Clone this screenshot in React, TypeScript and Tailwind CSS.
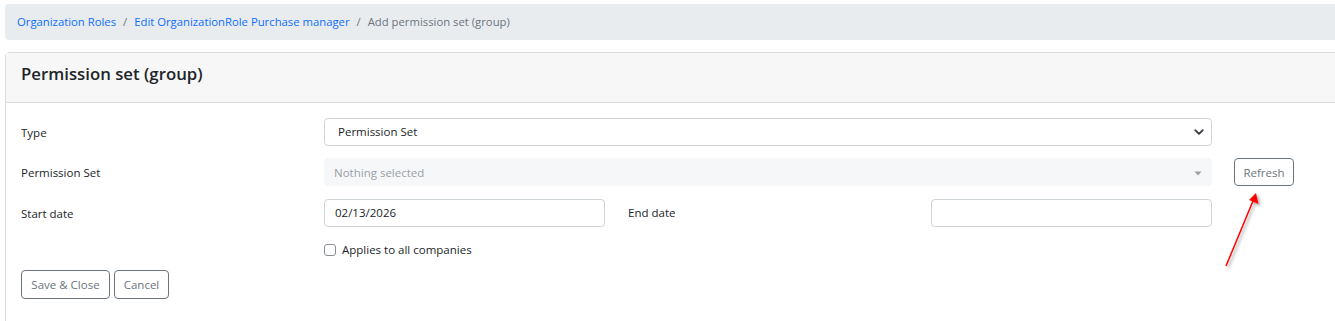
import React from "react";

const font = { fontFamily: '"Open Sans", "Noto Sans", sans-serif' };

export default function App() {
  return (
    <div className="w-[1335px] h-[321px] overflow-hidden bg-white relative" style={font}>
      <div className="w-[1360px] pl-[5px] pt-[4px]">
        {/* Breadcrumb */}
        <div className="h-[36px] bg-[#e9ecef] rounded-[4px] flex items-center pl-[12px] pt-[1px] text-[11.3px] text-[#6c757d]">
          <span className="text-[#0d6efd]">Organization Roles</span>
          <span className="px-[7px]">/</span>
          <span className="text-[#0d6efd]">Edit OrganizationRole Purchase manager</span>
          <span className="px-[7px]">/</span>
          <span>Add permission set (group)</span>
        </div>

        {/* Card */}
        <div className="mt-[12px] border border-[#dcdcdc] rounded-[4px]">
          <div className="h-[50px] bg-[#f7f7f7] border-b border-[#dcdcdc] flex items-center pl-[15px] pb-[7px] text-[16.8px] font-semibold text-[#212529]">
            Permission set (group)
          </div>
          <div className="pl-[15px] pt-[15px] pb-[40px] text-[11.5px] text-[#212529]">
            {/* Type */}
            <div className="flex items-center h-[28px]">
              <div className="w-[303px] pt-[1px]">Type</div>
              <div className="w-[888px] h-[28px] border border-[#ced4da] rounded-[4px] flex items-center justify-between pl-[13px] pr-[6px]">
                <span>Permission Set</span>
                <svg width="12" height="12" viewBox="0 0 16 16">
                  <path d="M3 5.5l5 5 5-5" fill="none" stroke="#343a40" strokeWidth="2.4" strokeLinecap="round" strokeLinejoin="round" />
                </svg>
              </div>
            </div>
            {/* Permission Set */}
            <div className="flex items-center h-[28px] mt-[12px]">
              <div className="w-[303px] pt-[1px]">Permission Set</div>
              <div className="w-[888px] h-[28px] bg-[#f6f7f9] rounded-[4px] flex items-center justify-between pl-[10px] pr-[10px] pt-[2px] text-[#9aa0a6]">
                <span>Nothing selected</span>
                <svg width="8" height="5" viewBox="0 0 8 5">
                  <path d="M0.5 0.5h7L4 4.5z" fill="#9aa0a6" />
                </svg>
              </div>
              <div className="ml-[22px] h-[28px] w-[60px] border border-[#6c757d] rounded-[4px] flex items-center justify-center pt-[2px] text-[#6c757d]">
                Refresh
              </div>
            </div>
            {/* Dates */}
            <div className="flex items-center h-[28px] mt-[13px]">
              <div className="w-[303px] pt-[1px]">Start date</div>
              <div className="w-[281px] h-[28px] border border-[#ced4da] rounded-[4px] flex items-center pl-[10px]">
                02/13/2026
              </div>
              <div className="ml-[23px] w-[303px]">End date</div>
              <div className="w-[281px] h-[28px] border border-[#ced4da] rounded-[4px]"></div>
            </div>
            {/* Checkbox */}
            <div className="flex items-center mt-[14px] pl-[303px]">
              <div className="w-[12px] h-[12px] border border-[#8a9096] rounded-[3px]"></div>
              <span className="ml-[6px]">Applies to all companies</span>
            </div>
            {/* Buttons */}
            <div className="flex mt-[12px] gap-[4px]">
              <div className="h-[29px] w-[89px] border border-[#6c757d] rounded-[4px] flex items-center justify-center text-[#6c757d]">
                Save &amp; Close
              </div>
              <div className="h-[29px] w-[55px] border border-[#6c757d] rounded-[4px] flex items-center justify-center text-[#6c757d]">
                Cancel
              </div>
            </div>
          </div>
        </div>
      </div>

      {/* Red arrow annotation */}
      <svg className="absolute left-[1215px] top-[185px]" width="60" height="90" viewBox="0 0 60 90">
        <defs>
          <filter id="sh" x="-50%" y="-50%" width="200%" height="200%">
            <feDropShadow dx="2" dy="2" stdDeviation="1.5" floodColor="#000" floodOpacity="0.35" />
          </filter>
        </defs>
        <g filter="url(#sh)">
          <line x1="11" y1="81" x2="38" y2="16" stroke="#ff0000" strokeWidth="1.5" />
          <path d="M41 8 L43.5 19 L34 15 Z" fill="#ff0000" />
        </g>
      </svg>
    </div>
  );
}
